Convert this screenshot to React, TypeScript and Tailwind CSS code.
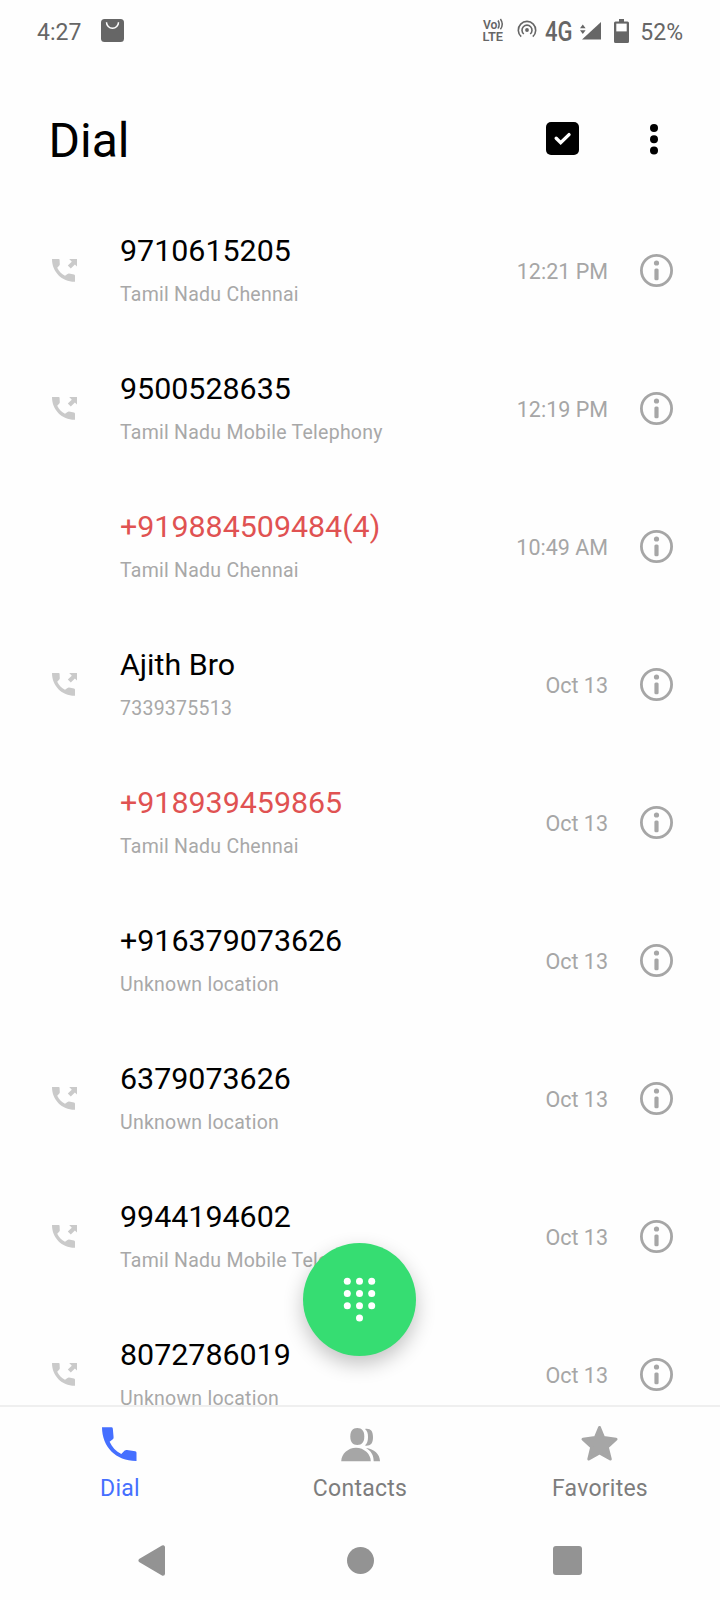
import { clsx } from "clsx";

type Call = {
  name: string;
  detail: string;
  time: string;
  kind: "outgoing" | "incoming" | "missed";
};

const calls: Call[] = [
  { name: "9710615205", detail: "Tamil Nadu Chennai", time: "12:21 PM", kind: "outgoing" },
  { name: "9500528635", detail: "Tamil Nadu Mobile Telephony", time: "12:19 PM", kind: "outgoing" },
  { name: "+919884509484(4)", detail: "Tamil Nadu Chennai", time: "10:49 AM", kind: "missed" },
  { name: "Ajith Bro", detail: "7339375513", time: "Oct 13", kind: "outgoing" },
  { name: "+918939459865", detail: "Tamil Nadu Chennai", time: "Oct 13", kind: "missed" },
  { name: "+916379073626", detail: "Unknown location", time: "Oct 13", kind: "incoming" },
  { name: "6379073626", detail: "Unknown location", time: "Oct 13", kind: "outgoing" },
  { name: "9944194602", detail: "Tamil Nadu Mobile Telephony", time: "Oct 13", kind: "outgoing" },
  { name: "8072786019", detail: "Unknown location", time: "Oct 13", kind: "outgoing" },
];

function StatusBar() {
  return (
    <div className="flex h-16 shrink-0 items-center pl-[37px] pr-[37px] text-[23px] leading-none text-[#666]">
      <span>4:27</span>
      <svg className="-mt-[3px] ml-5 h-[23px] w-[23px]" viewBox="0 0 23 23">
        <rect width="23" height="23" rx="3.5" fill="currentColor" />
        <path d="M5.5 3.2a6 6 0 0 0 12 0" fill="none" stroke="#fff" strokeWidth="1.5" />
      </svg>

      <div className="ml-auto flex items-center">
        <svg className="-mt-1 h-6 w-[22px] overflow-visible" viewBox="0 0 22 24" fill="currentColor">
          <text x="0" y="11" fontSize="12.5" fontWeight="600" textLength="14.5" lengthAdjust="spacingAndGlyphs">Vo</text>
          <path d="M15 2.5q2.4 3.8 0 8M17.4 1q3.8 5.4 0 10.2" fill="none" stroke="currentColor" strokeWidth="1.5" />
          <text x="-0.5" y="23" fontSize="13.5" fontWeight="600" textLength="20.5" lengthAdjust="spacingAndGlyphs">LTE</text>
        </svg>
        <svg className="-mt-1.5 ml-3 h-[18px] w-5" viewBox="0 0 20 18" fill="none" stroke="currentColor" strokeWidth="1.6">
          <circle cx="10" cy="10" r="1.9" fill="currentColor" stroke="none" />
          <path d="M6.8 14A5 5 0 1 1 13.2 14" />
          <path d="M4.2 16.6A8.7 8.7 0 1 1 15.8 16.6" />
        </svg>
        <svg className="-mt-[3px] ml-2 h-6 w-7 overflow-visible" viewBox="0 0 28 24" fill="currentColor">
          <text x="0" y="22" fontSize="28" fontWeight="500" textLength="27.5" lengthAdjust="spacingAndGlyphs">4G</text>
        </svg>
        <svg className="-mt-[3px] ml-[7px] h-[18px] w-[22px]" viewBox="0 0 22 18" fill="currentColor">
          <path d="M21 0v17.5H2z" />
          <path d="M0 6.3 2.8 2.6 5.6 6.3zM0 8.3h5.6L2.8 12z" />
        </svg>
        <svg className="-mt-[3px] ml-3 h-6 w-[15px]" viewBox="0 0 15 24" fill="currentColor">
          <path d="M5 0h5v2.5h3.5Q15 2.5 15 4v18.5Q15 24 13.5 24h-12Q0 24 0 22.5V4Q0 2.5 1.5 2.5H5z" />
          <path d="M2.3 4.6h10.4v7.8H2.3z" fill="#fff" />
        </svg>
        <span className="ml-[11px]">52%</span>
      </div>
    </div>
  );
}

function Header() {
  return (
    <header className="flex h-[137px] shrink-0 items-center pl-[48.5px] pt-3.5">
      <h1 className="pt-0.5 text-[48px] leading-none text-black">Dial</h1>
      <svg className="-mt-0.5 ml-auto h-[33px] w-[33px]" viewBox="0 0 33 33">
        <rect width="33" height="33" rx="5" fill="#000" />
        <path d="m10.2 16.2 4.5 4.4 8.3-8" fill="none" stroke="#fff" strokeWidth="3.4" strokeLinecap="round" />
      </svg>
      <svg className="ml-[70.5px] mr-[62.5px] h-[31px] w-2" viewBox="0 0 8 31">
        <circle cx="4" cy="4" r="4" />
        <circle cx="4" cy="15.3" r="4" />
        <circle cx="4" cy="26.5" r="4" />
      </svg>
    </header>
  );
}

function OutgoingIcon() {
  return (
    <svg className="h-[23px] w-[25px]" viewBox="0 0 25 23" fill="#cacaca">
      <path d="M0 0H6.8Q7.6 0 7.6 1L7.8 5.5Q7.8 6.3 5.2 8.7C7 12.5 9.5 15 13 16.8L15.5 15Q16.3 14.5 17 14.6L22 15.6Q23 15.8 23 16.8V22.8C10 23 0 13 0 0z" />
      <path d="M17.2 0H25V7.6L22.9 5.6 18.8 9.4 15.8 6.6 19.8 2.7z" />
    </svg>
  );
}

function InfoIcon() {
  return (
    <svg className="h-[33px] w-[33px]" viewBox="0 0 33 33">
      <circle cx="16.5" cy="16.5" r="15.1" fill="none" stroke="#a6a6a6" strokeWidth="2.8" />
      <circle cx="16.5" cy="9" r="2.6" fill="#a6a6a6" />
      <rect x="14.4" y="14.5" width="4.2" height="11.8" rx="1.5" fill="#a6a6a6" />
    </svg>
  );
}

function CallRow({ call }: { call: Call }) {
  return (
    <li className="flex h-[138px] shrink-0 items-center pl-[52px] pr-[47px]">
      <div className="w-[68px]">{call.kind === "outgoing" && <OutgoingIcon />}</div>
      <div className="flex-1 pt-0.5">
        <p
          className={clsx(
            "text-[30.4px] leading-9",
            call.kind === "missed" ? "text-[#e05252]" : "text-black",
          )}
        >
          {call.name}
        </p>
        <p className="mt-3 text-[19.5px] leading-7 tracking-[0.25px] text-[#a8a8a8]">{call.detail}</p>
      </div>
      <span className="mr-8 pt-1 text-[21.5px] text-[#a6a6a6]">{call.time}</span>
      <InfoIcon />
    </li>
  );
}

function DialpadButton() {
  const dots = [
    [44.3, 38.2], [56.5, 38.2], [68.7, 38.2],
    [44.3, 50.5], [56.5, 50.5], [68.7, 50.5],
    [44.3, 62.7], [56.5, 62.7], [68.7, 62.7],
    [56.5, 75],
  ];
  return (
    <button
      aria-label="Dialpad"
      className="absolute bottom-[49px] left-[303px] h-[113px] w-[113px] rounded-full bg-[#36dd72] shadow-[0_8px_20px_rgba(0,0,0,0.24)]"
    >
      <svg className="h-full w-full" viewBox="0 0 113 113" fill="#fff">
        {dots.map(([x, y]) => (
          <circle key={`${x}-${y}`} cx={x} cy={y} r="3.5" />
        ))}
      </svg>
    </button>
  );
}

function TabBar() {
  return (
    <nav className="grid h-[115px] shrink-0 grid-cols-3 border-t-2 border-[#efefef] text-[23px] leading-7 tracking-[0.25px] text-[#7d7d7d]">
      <div className="flex flex-col items-center pt-5 text-[#456fff]">
        <svg className="mr-px h-[35px] w-[35px]" viewBox="0 0 35 35" fill="currentColor">
          <path d="M0 .3H9.5Q10.6.3 10.8 1.5L11.6 10.2Q11.7 11.5 10.8 12.2L7.6 14.7C10 20 14 24.5 19.3 27L22.7 23.6Q23.7 22.8 25 23L33.2 24.3Q34.5 24.5 34.5 25.8V34C14 34.2 0 20 0 .3z" />
        </svg>
        <span className="mt-[13px]">Dial</span>
      </div>
      <div className="flex flex-col items-center pt-5">
        <svg className="h-[35px] w-10" viewBox="0 0 40 35" fill="#a6a6a6">
          <path d="M17.3 1C22 1 24.3 4 24.3 9.5S22 18 17.3 18 10.3 15 10.3 9.5 12.6 1 17.3 1z" />
          <path d="M25 2C30.5 1.2 33 4 33 10.2 33 16.5 30.5 19.2 24.8 18.6 27.2 16.5 28 14 28 10S27.2 4 25 2z" />
          <path d="M1.2 34.3C1.2 27 8 20.7 16 20.7S30.8 27 30.8 34.3z" />
          <path d="M26 21C34 22 40 27 40 34.3H33.7C33.7 28 31 24 26 21z" />
        </svg>
        <span className="mt-[13px]">Contacts</span>
      </div>
      <div className="flex flex-col items-center pt-[18px]">
        <svg className="h-[37px] w-10" viewBox="0 0 40 37" fill="#a6a6a6" stroke="#a6a6a6" strokeWidth="3" strokeLinejoin="round">
          <path d="M19.5 2.5 23.6 12.5 36 14.2 27.3 22.2 30.3 34 19.5 28 8.8 34 11.7 22.2 3 14.2 15.4 12.5z" />
        </svg>
        <span className="mt-[13px]">Favorites</span>
      </div>
    </nav>
  );
}

function SystemNav() {
  return (
    <div className="flex h-20 shrink-0 items-center justify-between px-[138px]">
      <svg className="h-[31px] w-[27px]" viewBox="0 0 27 31" fill="#939393" stroke="#939393" strokeWidth="4" strokeLinejoin="round">
        <path d="M25 2.3v26.4L2.5 15.5z" />
      </svg>
      <div className="ml-0.5 h-[27px] w-[27px] rounded-full bg-[#939393]" />
      <div className="h-[29px] w-[29px] rounded-[3px] bg-[#939393]" />
    </div>
  );
}

export default function App() {
  return (
    <div className="flex h-[1600px] w-[720px] flex-col overflow-hidden bg-[#fefefe] font-['Roboto',sans-serif]">
      <StatusBar />
      <Header />
      <main className="relative min-h-0 flex-1">
        <ul className="flex h-full flex-col overflow-hidden">
          {calls.map((call) => (
            <CallRow key={call.name} call={call} />
          ))}
        </ul>
        <DialpadButton />
      </main>
      <TabBar />
      <SystemNav />
    </div>
  );
}
